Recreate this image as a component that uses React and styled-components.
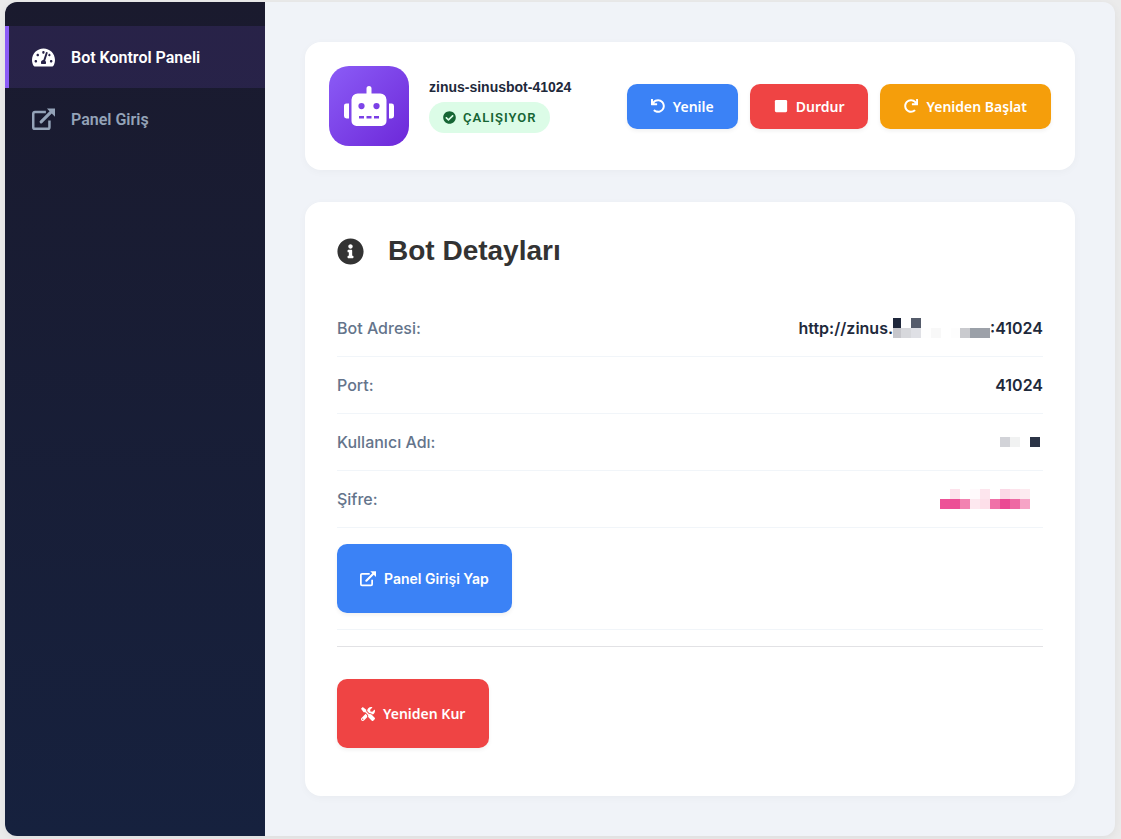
import styled, { createGlobalStyle } from 'styled-components';
import {
  FaTachometerAlt,
  FaRobot,
  FaCheckCircle,
  FaInfoCircle,
  FaUndo,
  FaRedo,
  FaStop,
  FaTools,
} from 'react-icons/fa';

const GlobalStyle = createGlobalStyle`
  * {
    box-sizing: border-box;
  }

  body {
    margin: 0;
    background-color: #ebebeb;
    font-family: Inter, "Liberation Sans", sans-serif;
    color: #1e293b;
  }
`;

const Shell = styled.div`
  display: flex;
  min-height: calc(100vh - 5px);
  margin: 2px 6px 3px 5px;
  border-radius: 12px;
  overflow: hidden;
  background-color: #f0f3f8;
  box-shadow: 0 2px 8px rgba(0, 0, 0, 0.06);
`;

const Sidebar = styled.nav`
  flex: 0 0 260px;
  padding-top: 24px;
  background: linear-gradient(180deg, #1a1a2e 0%, #16213e 100%);
`;

const MenuItem = styled.a`
  display: flex;
  align-items: center;
  gap: 16px;
  height: 62px;
  padding: 0 23px;
  border-left: 4px solid ${({ $active }) => ($active ? '#8b5cf6' : 'transparent')};
  background-color: ${({ $active }) => ($active ? 'rgba(139, 92, 246, 0.13)' : 'transparent')};
  color: ${({ $active }) => ($active ? '#ffffff' : '#94a3b8')};
  font-family: Roboto, sans-serif;
  font-size: 16px;
  font-weight: 600;
  text-decoration: none;

  svg {
    width: 23px;
    height: 23px;
  }
`;

const Main = styled.main`
  flex: 1;
  min-width: 0;
  padding: 40px;
`;

const Card = styled.section`
  padding: ${({ $padding }) => $padding};
  border-radius: 16px;
  background-color: #ffffff;
  box-shadow: 0 2px 8px rgba(0, 0, 0, 0.03);

  & + & {
    margin-top: 32px;
  }
`;

const BotHeader = styled.div`
  display: flex;
  align-items: center;
  justify-content: space-between;
`;

const BotInfo = styled.div`
  display: flex;
  align-items: center;
  gap: 20px;
`;

const Avatar = styled.div`
  display: flex;
  align-items: center;
  justify-content: center;
  width: 80px;
  height: 80px;
  border-radius: 20px;
  background: linear-gradient(135deg, #8b5cf6, #6d28d9);
  color: #ffffff;

  svg {
    width: 50px;
    height: 40px;
  }
`;

const BotName = styled.h1`
  margin: 0 0 6px;
  font-family: "Liberation Sans", sans-serif;
  font-size: 14px;
  line-height: 17px;
  font-weight: 700;
`;

const Status = styled.div`
  display: flex;
  align-items: center;
  gap: 7px;
  width: fit-content;
  height: 31px;
  padding: 0 14px;
  border-radius: 16px;
  background-color: #dcfce7;
  color: #166534;
  font-family: Roboto, sans-serif;
  font-size: 13px;
  font-weight: 600;
  letter-spacing: 1px;
`;

const Actions = styled.div`
  display: flex;
  gap: 12px;
`;

const colors = {
  blue: '#3b82f6',
  red: '#ef4444',
  orange: '#f59e0b',
};

const Button = styled.button`
  display: inline-flex;
  align-items: center;
  gap: 8px;
  height: ${({ $large }) => ($large ? '69px' : '45px')};
  padding: 0 24px;
  border: none;
  border-radius: 10px;
  background-color: ${({ $color }) => colors[$color]};
  box-shadow: 0 2px 4px rgba(0, 0, 0, 0.06);
  color: #ffffff;
  font-family: "Noto Sans", sans-serif;
  font-size: 14px;
  font-weight: 600;
  text-decoration: none;
  cursor: pointer;

  svg {
    width: auto;
    height: 14px;
  }
`;

const LinkButton = styled(Button)`
  padding: 0 23px;
  font-family: Inter, sans-serif;

  svg {
    width: 16px;
    height: 16px;
  }
`;

const Title = styled.h2`
  display: flex;
  align-items: center;
  gap: 24px;
  margin: 0 0 32px;
  color: #333333;
  font-family: "Liberation Sans", sans-serif;
  font-size: 28px;
  line-height: 34px;
  font-weight: 700;

  svg {
    width: 27px;
    height: 27px;
  }
`;

const Details = styled.dl`
  margin: 0;
`;

const Row = styled.div`
  display: flex;
  align-items: center;
  justify-content: space-between;
  min-height: 57px;
  padding: 16px 0;
  border-bottom: 1px solid #f1f5f9;
  font-size: 16px;
  line-height: 24px;
`;

const Label = styled.dt`
  color: #64748b;
  font-weight: 500;
`;

const Value = styled.dd`
  display: flex;
  align-items: center;
  margin: 0;
  font-weight: 600;
`;

const Divider = styled.hr`
  height: 1px;
  margin: 16px 0 32px;
  border: none;
  background-color: #e2e2e5;
`;

function ExternalLinkIcon() {
  return (
    <svg viewBox="0 0 24 24" fill="none" aria-hidden="true">
      <path
        d="M14.5 4.2H3A1.7 1.7 0 0 0 1.3 5.900V20A1.700 1.700 0 0 0 3 21.700H16.500A1.700 1.700 0 0 0 18.200 20V13"
        stroke="currentColor"
        strokeWidth="2.6"
      />
      <path d="M9.500 14.500L20 4" stroke="currentColor" strokeWidth="3.2" strokeLinecap="round" />
      <path d="M15.500 0.500H24V9Z" fill="currentColor" />
    </svg>
  );
}

const hostBlocks = [
  [0, 0, 8, '#1f273b'],
  [18, 0, 10, '#555c6b'],
  [0, 10, 8, '#c6c6cb'],
  [8, 10, 10, '#d7d8dc'],
  [18, 10, 10, '#dfe0e5'],
  [28, 10, 10, '#fefefe'],
  [38, 10, 10, '#f8f8f8'],
  [58, 10, 10, '#fdfdfd'],
  [67, 10, 10, '#c9cace'],
  [77, 10, 10, '#9aa0a8'],
  [87, 10, 10, '#9da1a9'],
];

const userBlocks = [
  [0, 0, 10, '#d2d3d8'],
  [10, 0, 10, '#f1f2f2'],
  [30, 0, 10, '#2b3446'],
];

const passwordBlocks = [
  [10, 0, 10, '#fde3ec'],
  [30, 0, 10, '#fffafc'],
  [40, 0, 10, '#fde5ed'],
  [60, 0, 10, '#fbd8e6'],
  [70, 0, 10, '#fde5ed'],
  [80, 0, 10, '#fdebf0'],
  [0, 10, 10, '#ed5297'],
  [10, 10, 10, '#ec4e95'],
  [20, 10, 10, '#f283b1'],
  [30, 10, 10, '#fde8ef'],
  [40, 10, 10, '#fddfe9'],
  [50, 10, 10, '#f071a8'],
  [60, 10, 10, '#eb4893'],
  [70, 10, 10, '#ee69a3'],
  [80, 10, 10, '#f6a4c6'],
];

const MosaicSvg = styled.svg`
  display: block;
  margin-right: ${({ $end }) => $end || 0}px;
`;

function Mosaic({ blocks, width, height, end, label }) {
  return (
    <MosaicSvg width={width} height={height} $end={end} role="img" aria-label={label}>
      {blocks.map(([x, y, w, fill]) => (
        <rect key={`${x}-${y}`} x={x} y={y} width={w} height="10" fill={fill} />
      ))}
    </MosaicSvg>
  );
}

function App() {
  return (
    <>
      <GlobalStyle />
      <Shell>
        <Sidebar>
          <MenuItem href="#kontrol" $active>
            <FaTachometerAlt />
            Bot Kontrol Paneli
          </MenuItem>
          <MenuItem href="#giris">
            <ExternalLinkIcon />
            Panel Giriş
          </MenuItem>
        </Sidebar>
        <Main>
          <Card $padding="24px">
            <BotHeader>
              <BotInfo>
                <Avatar>
                  <FaRobot />
                </Avatar>
                <div>
                  <BotName>zinus-sinusbot-41024</BotName>
                  <Status>
                    <FaCheckCircle />
                    ÇALIŞIYOR
                  </Status>
                </div>
              </BotInfo>
              <Actions>
                <Button type="button" $color="blue">
                  <FaUndo />
                  Yenile
                </Button>
                <Button type="button" $color="red">
                  <FaStop />
                  Durdur
                </Button>
                <Button type="button" $color="orange">
                  <FaRedo />
                  Yeniden Başlat
                </Button>
              </Actions>
            </BotHeader>
          </Card>
          <Card $padding="32px 32px 48px">
            <Title>
              <FaInfoCircle />
              Bot Detayları
            </Title>
            <Details>
              <Row>
                <Label>Bot Adresi:</Label>
                <Value>
                  http://zinus.
                  <Mosaic blocks={hostBlocks} width={97} height={20} label="gizli alan adı" />
                  :41024
                </Value>
              </Row>
              <Row>
                <Label>Port:</Label>
                <Value>41024</Value>
              </Row>
              <Row>
                <Label>Kullanıcı Adı:</Label>
                <Value>
                  <Mosaic blocks={userBlocks} width={40} height={10} end={3} label="gizli kullanıcı adı" />
                </Value>
              </Row>
              <Row>
                <Label>Şifre:</Label>
                <Value>
                  <Mosaic blocks={passwordBlocks} width={90} height={20} end={13} label="gizli şifre" />
                </Value>
              </Row>
            </Details>
            <Row>
              <LinkButton as="a" href="#giris" $color="blue" $large>
                <ExternalLinkIcon />
                Panel Girişi Yap
              </LinkButton>
            </Row>
            <Divider />
            <Button type="button" $color="red" $large>
              <FaTools />
              Yeniden Kur
            </Button>
          </Card>
        </Main>
      </Shell>
    </>
  );
}

export default App;
